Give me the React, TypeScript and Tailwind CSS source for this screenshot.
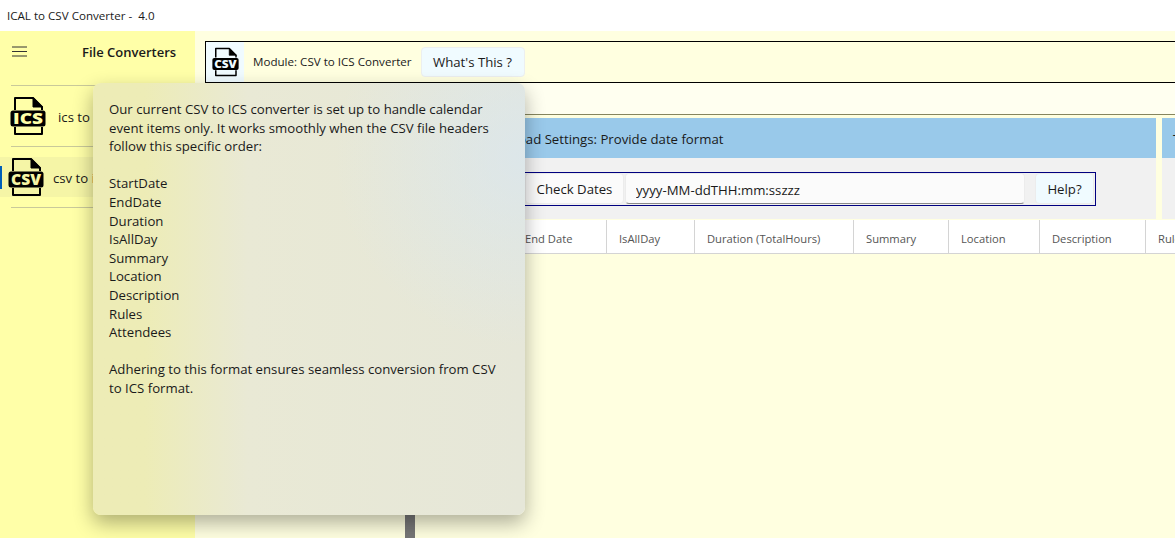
import type { ReactNode } from 'react';

const font = { fontFamily: '"Open Sans", "Noto Sans", sans-serif' };

const columns = [
  { label: 'End Date', width: 'w-[82px]', pad: 'pl-[0px]' },
  { label: 'IsAllDay', width: 'w-[88px]', pad: 'pl-[12px]' },
  { label: 'Duration (TotalHours)', width: 'w-[159px]', pad: 'pl-[12px]' },
  { label: 'Summary', width: 'w-[95px]', pad: 'pl-[12px]' },
  { label: 'Location', width: 'w-[91px]', pad: 'pl-[12px]' },
  { label: 'Description', width: 'w-[106px]', pad: 'pl-[12px]' },
  { label: 'Rules', width: 'w-[80px]', pad: 'pl-[12px]' },
];

const headers = ['StartDate', 'EndDate', 'Duration', 'IsAllDay', 'Summary', 'Location', 'Description', 'Rules', 'Attendees'];

function FileIcon({ label, width, height, fill }: { label: string; width: number; height: number; fill: string }) {
  return (
    <svg width={width} height={height} viewBox="0 0 36 40" className="shrink-0">
      <path d="M5 14V2h18l9 9v3M32 31v7H5v-7" fill="none" stroke="#000" strokeWidth="2" strokeLinejoin="round" />
      <path d="M23 1.500v9.500h9.500z" fill="#000" stroke="#000" strokeWidth="1" strokeLinejoin="round" />
      <rect x="0.500" y="14.500" width="35" height="16" rx="2.500" fill="#000" />
      <text
        x="18"
        y="27.600"
        textAnchor="middle"
        fontSize="15"
        fontWeight="800"
        textLength="30"
        lengthAdjust="spacingAndGlyphs"
        fill={fill}
        style={font}
      >
        {label}
      </text>
    </svg>
  );
}

function NavItem({ text, active, icon }: { text: string; active?: boolean; icon: ReactNode }) {
  return (
    <div className={`relative flex h-[40px] items-center ${active ? 'bg-[#f5f5a6] pl-[8px]' : 'pl-[10px]'}`}>
      {active && <div className="absolute left-0 top-[9px] h-[23px] w-[2px] bg-[#005fb8]" />}
      {icon}
      <span className={`pt-[3px] text-[13.200px] text-[#1a1a1a] ${active ? 'ml-[9px]' : 'ml-[12px]'}`}>{text}</span>
    </div>
  );
}

export default function App() {
  return (
    <div className="relative flex h-[538px] w-[1175px] flex-col overflow-hidden bg-white text-[#1a1a1a]" style={font}>
      <div className="flex h-[31px] shrink-0 items-center pl-[7px] text-[11.600px]">ICAL to CSV Converter -&nbsp; 4.0</div>

      <div className="flex min-h-0 flex-1">
        <aside className="flex w-[195px] shrink-0 flex-col bg-[#ffffa8]">
          <div className="flex h-[54px] shrink-0 items-start pl-[12px] pt-[13px]">
            <svg width="15" height="11" viewBox="0 0 15 11" className="mt-[2px]" stroke="#333" strokeWidth="1">
              <path d="M0 1h15M0 5.500h15M0 10h15" />
            </svg>
            <span className="ml-[55px] text-[13px] font-semibold leading-[16px]">File Converters</span>
          </div>
          <div className="ml-[11px] h-px bg-[#c9c99a]" />
          <div className="mt-[10px] flex flex-col">
            <div className="pb-[10px]">
              <NavItem text="ics to csv" icon={<FileIcon label="ICS" width={36} height={40} fill="#ffffa8" />} />
            </div>
            <div className="ml-[11px] h-px bg-[#c9c99a]" />
            <div className="pt-[10px] pb-[10px]">
              <NavItem active text="csv to ics" icon={<FileIcon label="CSV" width={36} height={40} fill="#f5f5a6" />} />
            </div>
            <div className="ml-[11px] h-px bg-[#c9c99a]" />
          </div>
        </aside>

        <main className="flex min-w-0 flex-1 flex-col bg-[#ffffe0]">
          <div className="ml-[10px] mt-[10px] flex h-[42px] shrink-0 items-center border border-r-0 border-black">
            <div className="flex h-full w-[38px] items-center justify-center bg-[#f0fbff]">
              <FileIcon label="CSV" width={27} height={30} fill="#f0fbff" />
            </div>
            <span className="ml-[9px] text-[11.600px]">Module: CSV to ICS Converter</span>
            <button className="ml-[9px] h-[30px] w-[104px] rounded-[4px] border border-[#eceff0] bg-[#f0fbff] pt-[1px] text-[13.200px]">
              What's This ?
            </button>
          </div>

          <div className="h-[32px] shrink-0 border-b border-[#85855f] bg-[#fffff0]" />

          <div className="mt-[3px] flex shrink-0 gap-[6px]">
            <div className="w-[961px] shrink-0">
              <div className="flex h-[40px] items-center bg-[#99c9ea] pl-[316px] pt-[3px] text-[13.200px]">
                Load Settings: Provide date format
              </div>
              <div className="flex h-[61px] items-center bg-[#f1f1f1] pl-[100px]">
                <div className="flex h-[34px] w-[801px] items-center border border-[#000080] pl-[229px]">
                  <button className="h-[31px] w-[99px] rounded-[4px] border border-[#ececec] bg-[#fbfbfb] pt-[2px] text-[13.200px]">
                    Check Dates
                  </button>
                  <input
                    readOnly
                    value="yyyy-MM-ddTHH:mm:sszzz"
                    className="ml-px h-[31px] w-[400px] rounded-[4px] border border-[#ececec] border-b-[#8a8a8a] bg-[#fbfbfb] pl-[10px] pt-[2px] text-[13.200px] outline-none"
                  />
                  <button className="ml-[10px] h-[31px] w-[59px] rounded-[4px] border border-[#ececec] bg-[#f0fbff] pt-[2px] text-[13.200px]">
                    Help?
                  </button>
                </div>
              </div>
            </div>
            <div className="min-w-0 flex-1">
              <div className="flex h-[40px] items-center overflow-hidden whitespace-nowrap bg-[#99c9ea] pl-[11px] pt-[3px] text-[13.200px]">
                T
              </div>
              <div className="h-[61px] bg-[#f1f1f1]" />
            </div>
          </div>

          <div className="mt-px flex h-[34px] shrink-0 border-b border-[#d4d4d4] bg-white pl-[330px] text-[11.200px] text-[#555]">
            {columns.map((col) => (
              <div key={col.label} className={`flex shrink-0 items-center border-r border-[#d4d4d4] pt-[5px] ${col.width} ${col.pad}`}>
                {col.label}
              </div>
            ))}
          </div>

          <div className="flex min-h-0 flex-1 items-end pl-[210px]">
            <div className="h-[30px] w-[10px] bg-[#767676]" />
          </div>
        </main>
      </div>

      {/* popup flyout */}
      <div className="absolute left-[93px] top-[83px] h-[432px] w-[432px] overflow-hidden rounded-[8px] bg-gradient-to-r from-[#edecb6] from-[12%] via-[#e9e9d5] via-[36%] to-[#e6e7d9] shadow-[0_8px_20px_rgba(0,0,0,0.32)]">
        <div className="h-full bg-[radial-gradient(circle_at_100%_17%,rgba(214,230,245,0.6),rgba(214,230,245,0)_34%)] px-[16px] pt-[17px] text-[13.200px] leading-[18.600px]">
          <p>
            Our current CSV to ICS converter is set up to handle calendar
            <br />
            event items only. It works smoothly when the CSV file headers
            <br />
            follow this specific order:
          </p>
          <div className="mt-[18.600px]">
            {headers.map((h) => (
              <div key={h}>{h}</div>
            ))}
          </div>
          <p className="mt-[18.600px]">
            Adhering to this format ensures seamless conversion from CSV
            <br />
            to ICS format.
          </p>
        </div>
      </div>
    </div>
  );
}
